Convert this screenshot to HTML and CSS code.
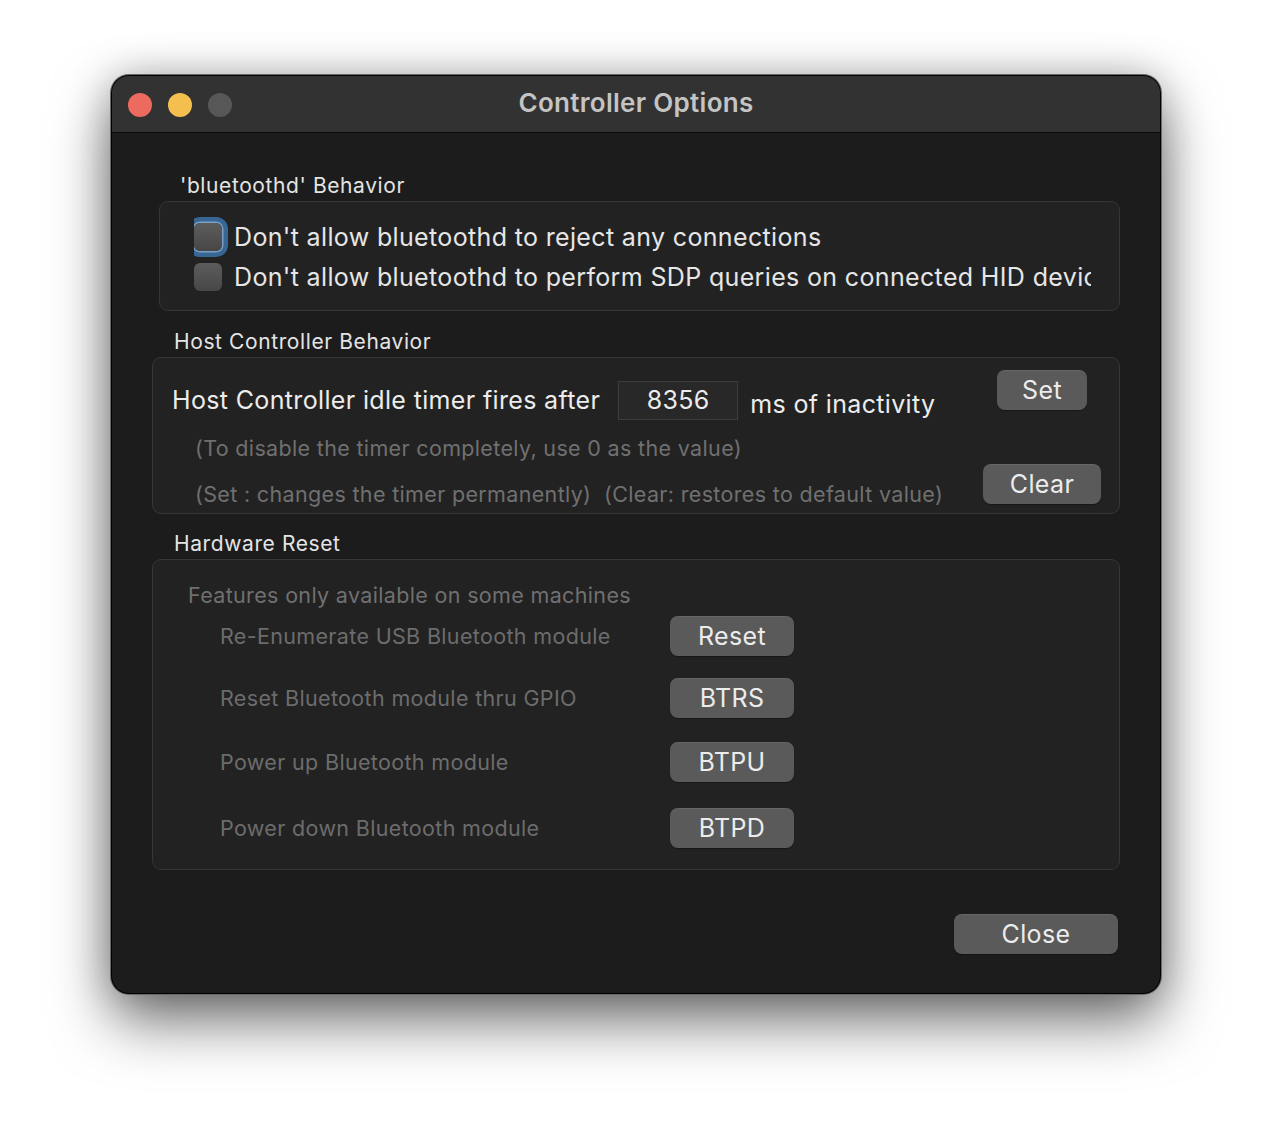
FILE: index.html
```html
<!DOCTYPE html>
<html>
<head>
<meta charset="utf-8">
<link rel="stylesheet" href="styles.css">
</head>
<body>
<div class="window">
  <div class="titlebar">
    <div class="lights">
      <span class="light red"></span>
      <span class="light yellow"></span>
      <span class="light gray"></span>
    </div>
    <div class="title">Controller Options</div>
  </div>
  <div class="content">
    <div class="section s1">
      <div class="label">'bluetoothd' Behavior</div>
      <div class="box box1">
        <div class="check-row">
          <span class="checkbox focus"></span>
          <span class="check-text">Don't allow bluetoothd to reject any connections</span>
        </div>
        <div class="check-row">
          <span class="checkbox"></span>
          <span class="check-text">Don't allow bluetoothd to perform SDP queries on connected HID devices</span>
        </div>
      </div>
    </div>

    <div class="section s2">
      <div class="label">Host Controller Behavior</div>
      <div class="box box2">
        <div class="timer-left">
          <div class="timer-row">
            <span class="main-text">Host Controller idle timer fires after</span>
            <span class="field">8356</span>
            <span class="main-text ms">ms of inactivity</span>
          </div>
          <div class="hint hint1">(To disable the timer completely, use 0 as the value)</div>
          <div class="hint hint2">(Set : changes the timer permanently)&nbsp;&nbsp;(Clear: restores to default value)</div>
        </div>
        <div class="timer-right">
          <button class="btn btn-set">Set</button>
          <button class="btn btn-clear">Clear</button>
        </div>
      </div>
    </div>

    <div class="section s3">
      <div class="label">Hardware Reset</div>
      <div class="box box3">
        <div class="hint features">Features only available on some machines</div>
        <div class="hw-row r1">
          <span class="hw-label">Re-Enumerate USB Bluetooth module</span>
          <button class="btn btn-hw">Reset</button>
        </div>
        <div class="hw-row r2">
          <span class="hw-label">Reset Bluetooth module thru GPIO</span>
          <button class="btn btn-hw">BTRS</button>
        </div>
        <div class="hw-row r3">
          <span class="hw-label">Power up Bluetooth module</span>
          <button class="btn btn-hw">BTPU</button>
        </div>
        <div class="hw-row r4">
          <span class="hw-label">Power down Bluetooth module</span>
          <button class="btn btn-hw">BTPD</button>
        </div>
      </div>
    </div>

    <div class="footer">
      <button class="btn btn-close">Close</button>
    </div>
  </div>
</div>
</body>
</html>
```
FILE: styles.css
```css
html, body {
  margin: 0;
  padding: 0;
  background: #ffffff;
}
body {
  padding: 76px 0 0 112px;
  font-family: Inter, "Noto Sans", "Liberation Sans", sans-serif;
  height: 1142px;
  box-sizing: border-box;
  overflow: hidden;
}
.window {
  width: 1048px;
  height: 917px;
  background: #1c1c1c;
  border-radius: 17px;
  box-shadow: 0 0 0 1px #000, 0 0 0 2px #6a6a6a, 0 28px 60px rgba(0,0,0,0.55), 0 0 40px rgba(0,0,0,0.25);
  overflow: hidden;
  display: flex;
  flex-direction: column;
}
.titlebar {
  height: 56px;
  background: #323232;
  border-bottom: 1px solid #0c0c0c;
  display: flex;
  align-items: center;
  position: relative;
  flex: none;
}
.lights {
  display: flex;
  gap: 16px;
  padding-left: 16px;
  padding-top: 1px;
}
.light {
  width: 24px;
  height: 24px;
  border-radius: 50%;
  display: block;
}
.red { background: #ed6a5e; }
.yellow { background: #f5bf4f; }
.gray { background: #575757; }
.title {
  position: absolute;
  left: 0;
  right: 0;
  top: 0;
  height: 56px;
  line-height: 54px;
  text-align: center;
  font-size: 26px;
  font-weight: 600;
  color: #c4c4c4;
  letter-spacing: 0.3px;
}
.content {
  flex: 1;
  display: flex;
  flex-direction: column;
}
.label {
  font-size: 21px;
  line-height: 24px;
  letter-spacing: 0.6px;
  color: #e4e4e4;
  height: 24px;
  margin-bottom: 3px;
  padding-top: 1px;
}
.box {
  background: #222222;
  border: 1px solid #363636;
  border-radius: 9px;
  box-sizing: border-box;
}
.s1 { margin-top: 40px; }
.s1 .label { padding-left: 68px; }
.box1 {
  margin-left: 47px;
  width: 961px;
  height: 110px;
  padding: 15px 28px 0 34px;
}
.check-row {
  height: 40px;
  display: flex;
  align-items: center;
  gap: 12px;
  overflow: hidden;
  white-space: nowrap;
}
.checkbox {
  width: 28px;
  height: 28px;
  border-radius: 6px;
  background: linear-gradient(#5c5c5c, #474747);
  flex: none;
  box-sizing: border-box;
}
.checkbox.focus {
  box-shadow: 0 0 0 1.5px #7a9ec6, 0 0 0 6px #386695;
}
.check-text {
  font-size: 25px;
  letter-spacing: 0.35px;
  color: #e6e6e6;
  overflow: hidden;
  white-space: nowrap;
}
.s2 { margin-top: 18px; }
.s2 .label, .s3 .label { padding-left: 62px; }
.box2 {
  margin-left: 40px;
  width: 968px;
  height: 157px;
  display: flex;
  padding: 0 18px 0 19px;
}
.timer-left {
  flex: 1;
  padding-top: 22px;
}
.timer-row {
  display: flex;
  align-items: center;
  height: 40px;
}
.main-text {
  font-size: 25px;
  letter-spacing: 0.35px;
  color: #ececec;
  white-space: nowrap;
}
.ms { padding-top: 8px; }
.field {
  width: 120px;
  height: 39px;
  margin: 0 12px 0 18px;
  background: #282828;
  border: 1px solid #3c3c3c;
  box-sizing: border-box;
  font-size: 25px;
  letter-spacing: 0.35px;
  line-height: 37px;
  text-align: center;
  color: #ececec;
}
.hint {
  font-size: 21.5px;
  letter-spacing: 0.34px;
  color: #707070;
  white-space: nowrap;
  line-height: 30px;
}
.hint1 { margin: 13px 0 0 23px; }
.hint2 { margin: 16px 0 0 23px; }
.timer-right {
  width: 118px;
  display: flex;
  flex-direction: column;
  align-items: center;
  padding-top: 12px;
}
.btn {
  font-family: Inter, "Noto Sans", "Liberation Sans", sans-serif;
  background: #5a5a5a;
  color: #ececec;
  border: none;
  border-radius: 8px;
  font-size: 25px;
  letter-spacing: 0.35px;
  height: 40px;
  padding: 0;
  box-shadow: inset 0 1px 0 rgba(255,255,255,0.08), 0 1px 1px rgba(0,0,0,0.3);
  cursor: default;
  line-height: 38px;
}
.btn-set { width: 90px; }
.btn-clear { width: 118px; margin-top: 54px; }
.s3 { margin-top: 17px; }
.box3 {
  margin-left: 40px;
  width: 968px;
  height: 311px;
  padding: 20px 0 0 35px;
}
.features { margin-bottom: 6px; }
.hw-row {
  display: flex;
  align-items: center;
  height: 40px;
  padding-left: 32px;
}
.r2 { margin-top: 22px; }
.r3 { margin-top: 24px; }
.r4 { margin-top: 26px; }
.hw-label {
  width: 450px;
  font-size: 21.5px;
  letter-spacing: 0.34px;
  color: #6c6c6c;
  white-space: nowrap;
}
.btn-hw { width: 124px; }
.footer {
  display: flex;
  justify-content: flex-end;
  padding: 44px 42px 0 0;
}
.btn-close { width: 164px; }
```
